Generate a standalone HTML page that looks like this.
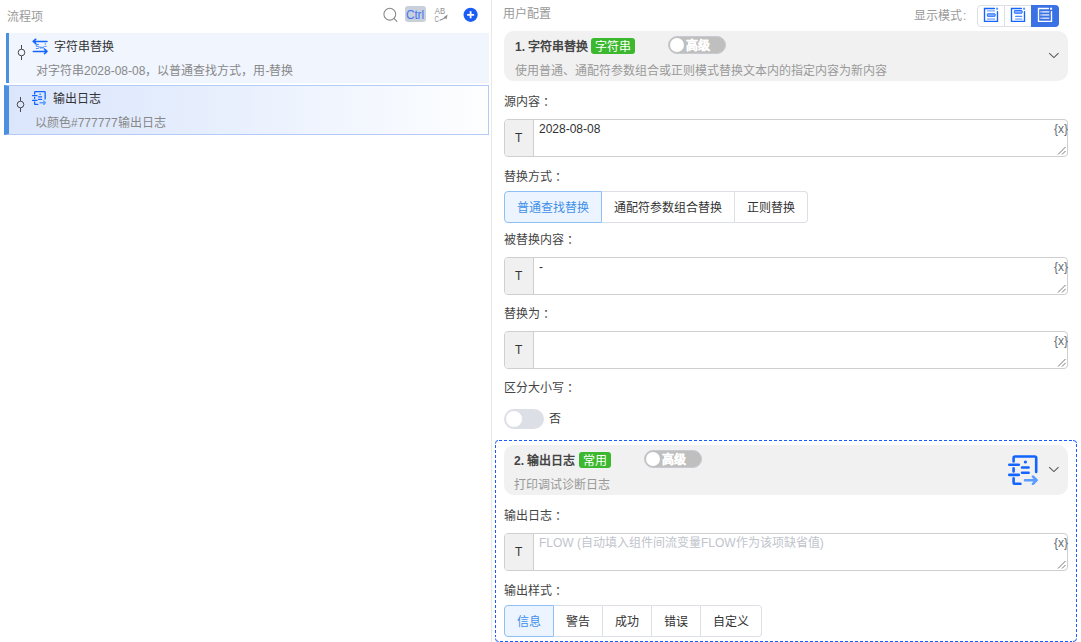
<!DOCTYPE html>
<html lang="zh-CN">
<head>
<meta charset="utf-8">
<style>
html,body{margin:0;padding:0;}
body{width:1081px;height:642px;overflow:hidden;position:relative;background:#fff;font-family:"Liberation Sans",sans-serif;font-size:12px;color:#333;}
.a{position:absolute;white-space:nowrap;line-height:16px;}
.g{color:#999;}
.lbl{color:#444;}
.c{position:relative;left:3px;}
.item{position:absolute;box-sizing:border-box;}
.card{position:absolute;left:504px;width:564px;height:50px;background:#f1f1f1;border-radius:10px;}
.ttl{font-weight:bold;color:#444;}
.badge{position:absolute;height:16px;line-height:18px;background:#3bb82d;color:#fff;border-radius:3px;padding:0 4px;box-sizing:border-box;}
.tog{position:absolute;width:58px;height:18px;background:#bfbfbf;border-radius:9px;box-sizing:border-box;border:1px solid #c9c9d2;}
.tog .k{position:absolute;left:1px;top:1px;width:14px;height:14px;border-radius:50%;background:#fff;}
.tog .t{position:absolute;left:17px;top:1px;line-height:16px;color:#fff;font-weight:bold;-webkit-text-stroke:0.25px #fff;}
.inp{position:absolute;left:504px;width:564px;height:38px;box-sizing:border-box;border:1px solid #cfcfcf;border-radius:4px;background:#fff;}
.inp .pre{position:absolute;left:0;top:0;bottom:0;width:28px;background:#f0f0f0;border-right:1px solid #cfcfcf;border-radius:3px 0 0 3px;}
.inp .pre span{position:absolute;left:10px;top:10px;line-height:16px;color:#333;}
.inp .val{position:absolute;left:34px;top:1px;line-height:16px;color:#303133;}
.inp .var{position:absolute;right:-1px;top:1px;line-height:16px;color:#646b76;font-size:12px;}
.inp .rs{position:absolute;right:1px;bottom:1px;width:9px;height:9px;}
.seg{position:absolute;left:504px;height:32px;display:flex;}
.seg div{box-sizing:border-box;height:32px;line-height:32px;padding:0 12px;border:1px solid #dcdfe6;border-left:none;color:#333;white-space:nowrap;}
.seg div:first-child{border-left:1px solid #dcdfe6;border-radius:4px 0 0 4px;}
.seg div:last-child{border-radius:0 4px 4px 0;}
.seg div.on{background:#ecf5ff;border-color:#8fc0f5;color:#3f8ee8;border-left:1px solid #8fc0f5;}
.chev{position:absolute;width:12px;height:8px;}
</style>
</head>
<body>
<!-- LEFT PANEL -->
<div class="a g" style="left:7px;top:9px;">流程项</div>
<!-- search icon -->
<svg style="position:absolute;left:382px;top:6px" width="16" height="16" viewBox="0 0 16 16"><circle cx="7.8" cy="8.2" r="5.9" fill="none" stroke="#888" stroke-width="1.05"/><path d="M12.2 12.6 L14.8 15.3" stroke="#888" stroke-width="1.1" stroke-linecap="round"/></svg>
<div style="position:absolute;left:405px;top:6px;width:21px;height:16px;background:#c9d0dc;border-radius:3px;"></div>
<div class="a" style="left:406px;top:7px;color:#4477f2;font-size:12px;letter-spacing:-0.2px">Ctrl</div>
<!-- ABC icon -->
<svg style="position:absolute;left:434px;top:7px" width="15" height="16" viewBox="0 0 15 16"><text x="0.8" y="6.9" font-family="Liberation Sans" font-size="8.2" textLength="10.2" lengthAdjust="spacingAndGlyphs" fill="#8e8e8e">AB</text><text x="0.6" y="14.7" font-family="Liberation Sans" font-size="8.2" textLength="4.4" lengthAdjust="spacingAndGlyphs" fill="#8e8e8e">C</text><path d="M5.6 13.2 Q8.5 12.6 11.2 10.6" stroke="#8e8e8e" stroke-width="1.1" fill="none"/><path d="M9.6 10.2 L13.6 7.6 L12.6 12.2 Z" fill="#8e8e8e"/></svg>
<!-- plus -->
<svg style="position:absolute;left:463px;top:7px" width="16" height="16" viewBox="0 0 16 16"><circle cx="7.6" cy="7.8" r="7.1" fill="#1b5cf5"/><path d="M7.6 4.3 V11.3 M4.1 7.8 H11.1" stroke="#fff" stroke-width="1.8"/></svg>

<!-- item 1 -->
<div class="item" style="left:6px;top:33px;width:483px;height:50px;background:#f0f5fe;border-left:3px solid #4a8fe0;"></div>
<svg style="position:absolute;left:15px;top:43px" width="13" height="19" viewBox="0 0 13 19"><path d="M6.5 2 V6.2 M6.5 12.8 V17" stroke="#4a4a4a" stroke-width="1"/><circle cx="6.5" cy="9.5" r="3.3" fill="none" stroke="#4a4a4a" stroke-width="1"/></svg>
<svg style="position:absolute;left:32px;top:38px" width="17" height="17" viewBox="0 0 17 17"><path d="M15 3.45 H1.3 M3.8 1.2 L1.2 3.45 L3.8 5.7" stroke="#1464ff" stroke-width="1.55" fill="none" stroke-linecap="round" stroke-linejoin="round"/><path d="M1.3 13.4 H14.9 M12.5 11.1 L15 13.4 L12.5 15.7" stroke="#1464ff" stroke-width="1.55" fill="none" stroke-linecap="round" stroke-linejoin="round"/><path d="M7 6.5 H4.2 V8.3 H6.2 Q7.2 8.5 7.1 9.5 Q7 10.5 6 10.5 H3.9" stroke="#4f8dff" stroke-width="1" fill="none" stroke-linejoin="round"/><path d="M7.9 8.3 L8.8 10.5 L9.9 8.8 L11 10.5 L11.9 8.3" stroke="#4f8dff" stroke-width="1" fill="none" stroke-linejoin="round"/><path d="M12.6 8.4 H14.6" stroke="#4f8dff" stroke-width="1"/><circle cx="13.3" cy="6" r="0.75" fill="#4f8dff"/></svg>
<div class="a" style="left:54px;top:39px;color:#333;">字符串替换</div>
<div class="a" style="left:36px;top:63px;color:#888;">对字符串2028-08-08，以普通查找方式，用-替换</div>

<!-- item 2 -->
<div class="item" style="left:4px;top:85px;width:485px;height:50px;background:linear-gradient(90deg,#dbe6fc 0%,#e6eefd 40%,#fdfeff 100%);border:1px solid #b3cbf6;border-left:5px solid #4a8fe0;"></div>
<svg style="position:absolute;left:14px;top:95px" width="13" height="19" viewBox="0 0 13 19"><path d="M6.5 2 V6.2 M6.5 12.8 V17" stroke="#4a4a4a" stroke-width="1"/><circle cx="6.5" cy="9.5" r="3.3" fill="none" stroke="#4a4a4a" stroke-width="1"/></svg>
<svg style="position:absolute;left:32px;top:91px" width="14" height="14" viewBox="0 0 30 30"><path d="M5.6 6.4 V3 Q5.6 1.5 7.1 1.5 H26.7 Q28.2 1.5 28.2 3 V17" stroke="#1464ff" stroke-width="2.8" fill="none" stroke-linecap="round"/><path d="M1.2 9.8 H10.8 M1.2 19.9 H10.8 M5.6 13.6 V16.1 M5.6 23.6 V27.4 Q5.6 28.9 7.1 28.9 H12.4 M14 12.5 H20.6 M14 17.8 H20.6" stroke="#1464ff" stroke-width="2.8" fill="none" stroke-linecap="round"/><circle cx="17.4" cy="7" r="1.7" fill="#1464ff"/><path d="M17 25.2 H28.2 M25 21.6 L28.6 25.2 L25 28.8" stroke="#5a9cff" stroke-width="2.8" fill="none" stroke-linecap="round" stroke-linejoin="round"/></svg>
<div class="a" style="left:53px;top:91px;color:#333;">输出日志</div>
<div class="a" style="left:35px;top:115px;color:#888;">以颜色#777777输出日志</div>

<!-- divider -->
<div style="position:absolute;left:491px;top:0;width:1px;height:642px;background:#e8e8e8;"></div>

<!-- RIGHT PANEL -->
<div class="a g" style="left:503px;top:6px;">用户配置</div>
<div class="a g" style="left:914px;top:8px;">显示模式<span style="margin-left:1px">:</span></div>
<div style="position:absolute;left:977px;top:5px;width:82px;height:22px;box-sizing:border-box;border:1px solid #dcdfe6;border-radius:4px;"></div>
<div style="position:absolute;left:1004px;top:5px;width:1px;height:22px;background:#dcdfe6;"></div>
<div style="position:absolute;left:1031px;top:5px;width:28px;height:22px;background:#3a72e6;border-radius:0 4px 4px 0;"></div>
<svg style="position:absolute;left:983px;top:7px" width="16" height="16" viewBox="0 0 16 16"><path d="M11.4 1.5 H1.5 V14.3 H14.5 V4.6" stroke="#1464ff" stroke-width="1.35" fill="none" stroke-linecap="round"/><rect x="13.1" y="0.7" width="2" height="2" fill="#5b95ff"/><rect x="4" y="3" width="8" height="1.7" fill="#9dc0ff"/><rect x="4.35" y="6.75" width="7.8" height="2.6" rx="0.4" fill="#8db4ff" stroke="#1464ff" stroke-width="0.9"/><rect x="4" y="11.2" width="8" height="1.8" fill="#9dc0ff"/></svg>
<svg style="position:absolute;left:1010px;top:7px" width="16" height="16" viewBox="0 0 16 16"><path d="M11.4 1.5 H1.5 V14.3 H14.5 V4.6" stroke="#1464ff" stroke-width="1.35" fill="none" stroke-linecap="round"/><rect x="13.1" y="0.7" width="2" height="2" fill="#5b95ff"/><rect x="4.35" y="3.55" width="7.8" height="2.7" rx="0.4" fill="#8db4ff" stroke="#1464ff" stroke-width="0.9"/><rect x="5.1" y="8.7" width="7.2" height="1.3" rx="0.6" fill="#4f8cff"/><rect x="5.1" y="11.2" width="7.2" height="1.8" fill="#9dc0ff"/></svg>
<svg style="position:absolute;left:1037px;top:7px" width="16" height="16" viewBox="0 0 16 16"><path d="M11.4 1.5 H1.5 V14.3 H14.5 V4.6" stroke="#fff" stroke-width="1.35" fill="none" stroke-linecap="round"/><rect x="13.1" y="0.7" width="2" height="2" fill="#fff"/><rect x="3.1" y="4.1" width="9.2" height="1.5" fill="#d3dff9"/><rect x="3.1" y="7.2" width="9.2" height="1.5" fill="#d3dff9"/><rect x="3.1" y="10.5" width="9.2" height="1.4" fill="#d3dff9"/><rect x="3.1" y="3.8" width="2.2" height="8.4" fill="#3a72e6" opacity="0.35"/></svg>

<!-- card 1 -->
<div class="card" style="top:31px;"></div>
<div class="a ttl" style="left:515px;top:39px;">1. 字符串替换</div>
<div class="badge" style="left:591px;top:38px;">字符串</div>
<div class="tog" style="left:668px;top:36px;"><div class="k"></div><div class="t">高级</div></div>
<div class="a g" style="left:515px;top:63px;">使用普通、通配符参数组合或正则模式替换文本内的指定内容为新内容</div>
<svg class="chev" style="left:1048px;top:51px" viewBox="0 0 12 8"><path d="M1.2 2.1 L5.9 6.6 L10.5 2.1" stroke="#555" stroke-width="1.05" fill="none"/></svg>

<!-- fields -->
<div class="a lbl" style="left:504px;top:94px;">源内容<span class="c">：</span></div>
<div class="inp" style="top:119px;"><div class="pre"><span>T</span></div><div class="val">2028-08-08</div><div class="var">{x}</div><svg class="rs" viewBox="0 0 9 9"><path d="M1 8.5 L8.5 1 M5 8.5 L8.5 5" stroke="#666" stroke-width="0.9"/></svg></div>

<div class="a lbl" style="left:504px;top:169px;">替换方式<span class="c">：</span></div>
<div class="seg" style="top:191px;"><div class="on">普通查找替换</div><div>通配符参数组合替换</div><div>正则替换</div></div>

<div class="a lbl" style="left:504px;top:232px;">被替换内容<span class="c">：</span></div>
<div class="inp" style="top:257px;"><div class="pre"><span>T</span></div><div class="val">-</div><div class="var">{x}</div><svg class="rs" viewBox="0 0 9 9"><path d="M1 8.5 L8.5 1 M5 8.5 L8.5 5" stroke="#666" stroke-width="0.9"/></svg></div>

<div class="a lbl" style="left:504px;top:306px;">替换为<span class="c">：</span></div>
<div class="inp" style="top:331px;"><div class="pre"><span>T</span></div><div class="var">{x}</div><svg class="rs" viewBox="0 0 9 9"><path d="M1 8.5 L8.5 1 M5 8.5 L8.5 5" stroke="#666" stroke-width="0.9"/></svg></div>

<div class="a lbl" style="left:504px;top:380px;">区分大小写<span class="c">：</span></div>
<div style="position:absolute;left:504px;top:409px;width:40px;height:20px;border-radius:10px;background:#dcdfe6;"></div>
<div style="position:absolute;left:506px;top:411px;width:16px;height:16px;border-radius:50%;background:#fff;"></div>
<div class="a" style="left:549px;top:411px;color:#3a3a3a;">否</div>

<!-- card 2 (dashed container) -->
<svg style="position:absolute;left:495px;top:440px" width="582" height="202" viewBox="0 0 582 202"><g fill="none" stroke="#1a5cff" stroke-width="1"><path d="M4 0.5 H577 M5 201.5 H577 M0.5 5 V197 M581.5 4 V197" stroke-dasharray="3 2"/><path d="M0.5 3.5 Q0.5 0.5 3 0.5 M578 0.5 Q581.5 0.5 581.5 3 M0.5 198.5 Q0.5 201.5 3.5 201.5 M578 201.5 Q581.5 201.5 581.5 198.5"/></g></svg>
<div class="card" style="top:445px;"></div>
<div class="a ttl" style="left:514px;top:453px;">2. 输出日志</div>
<div class="badge" style="left:579px;top:452px;">常用</div>
<div class="tog" style="left:644px;top:450px;"><div class="k"></div><div class="t">高级</div></div>
<div class="a g" style="left:514px;top:477px;">打印调试诊断日志</div>
<svg style="position:absolute;left:1008px;top:455px" width="30" height="30" viewBox="0 0 30 30"><path d="M5.6 6.4 V3 Q5.6 1.5 7.1 1.5 H26.7 Q28.2 1.5 28.2 3 V17" stroke="#1464ff" stroke-width="2.6" fill="none" stroke-linecap="round"/><path d="M1.3 9.8 H10.8 M1.3 19.9 H10.8 M5.6 13.2 V16.5 M5.6 23.3 V27.4 Q5.6 28.9 7.1 28.9 H12.4 M14 12.5 H20.6 M14 17.8 H20.6" stroke="#1464ff" stroke-width="2.6" fill="none" stroke-linecap="round"/><circle cx="17.4" cy="7" r="1.6" fill="#1464ff"/><path d="M17 25.2 H28.2 M25 21.6 L28.6 25.2 L25 28.8" stroke="#5a9cff" stroke-width="2.6" fill="none" stroke-linecap="round" stroke-linejoin="round"/></svg>
<svg class="chev" style="left:1048px;top:465px" viewBox="0 0 12 8"><path d="M1.2 2.1 L5.9 6.6 L10.5 2.1" stroke="#555" stroke-width="1.05" fill="none"/></svg>

<div class="a lbl" style="left:504px;top:508px;">输出日志<span class="c">：</span></div>
<div class="inp" style="top:533px;"><div class="pre"><span>T</span></div><div class="val" style="color:#c0c4cc">FLOW (自动填入组件间流变量FLOW作为该项缺省值)</div><div class="var">{x}</div><svg class="rs" viewBox="0 0 9 9"><path d="M1 8.5 L8.5 1 M5 8.5 L8.5 5" stroke="#666" stroke-width="0.9"/></svg></div>

<div class="a lbl" style="left:504px;top:583px;">输出样式<span class="c">：</span></div>
<div class="seg" style="top:605px;"><div class="on">信息</div><div>警告</div><div>成功</div><div>错误</div><div>自定义</div></div>
</body>
</html>
